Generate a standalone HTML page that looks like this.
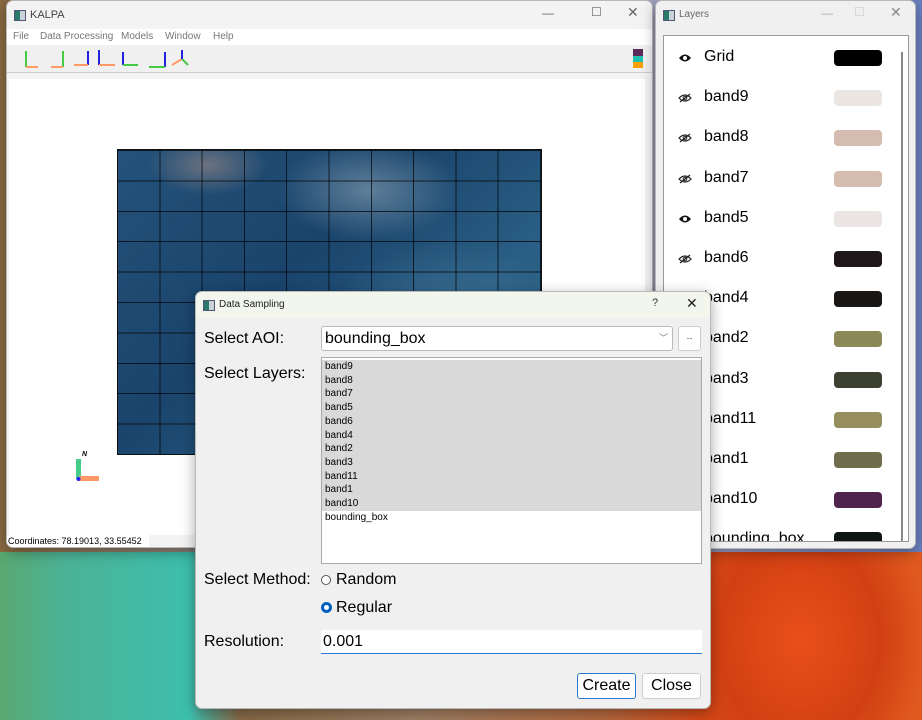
<!DOCTYPE html>
<html><head><meta charset="utf-8"><style>
*{box-sizing:border-box;margin:0;padding:0}
body{width:922px;height:720px;overflow:hidden;position:relative;font-family:"Liberation Sans",sans-serif;
background:
radial-gradient(ellipse 160px 200px at 800px 640px,#e8501a 0%,#d24012 50%,transparent 80%),
linear-gradient(90deg,#5aa870 0px,#4cb294 60px,#3dbfae 190px,#8a6a48 240px,#a08064 420px,#b46a40 600px,#d84a18 700px,#e05a20 922px);}
.top{position:absolute;left:0;top:0;width:922px;height:552px;background:linear-gradient(90deg,#8a6a40,#9aa0b8 40%,#a8aac8 70%,#6a80c0)}
.win{position:absolute;background:#f0f0f0;border:1px solid #b8b8b8;border-radius:7px;overflow:hidden;box-shadow:0 4px 14px rgba(0,0,0,.35)}
.tt{font-size:12px;color:#444;position:absolute}
.ic{position:absolute;width:12px;height:11px;background:linear-gradient(90deg,#2c7a6c 50%,#c8d4d8 50%);border:1px solid #557}
.ctl{position:absolute;font-size:12px;color:#666}
.row{position:absolute;left:0;width:240px;height:40px}
.row .n{position:absolute;left:40px;top:12px;font-size:16px;color:#000}
.row .s{position:absolute;left:170px;top:14px;width:48px;height:16px;border-radius:4px}
.row svg{position:absolute;left:14px;top:17px}
.lb{font-size:10px;line-height:13.7px;padding-left:3px;color:#000}
.L{position:absolute;font-size:16px}
</style></head><body>
<div class="top"></div>

<div class="win" style="left:6px;top:0;width:647px;height:548px;background:#f3f3f3">
 <div class="ic" style="left:7px;top:9px"></div>
 <div class="tt" style="left:23px;top:8px;font-size:11px">KALPA</div>
 <div class="ctl" style="left:535px;top:5px">—</div>
 <div class="ctl" style="left:584px;top:4px">☐</div>
 <div class="ctl" style="left:620px;top:3px;font-size:14px">✕</div>
 <div style="position:absolute;left:0;top:28px;width:100%;height:16px;background:#fff;font-size:10px;color:#777;white-space:nowrap">
  <span style="position:absolute;left:6px;top:2px">File</span>
  <span style="position:absolute;left:33px;top:2px">Data Processing</span>
  <span style="position:absolute;left:114px;top:2px">Models</span>
  <span style="position:absolute;left:158px;top:2px">Window</span>
  <span style="position:absolute;left:206px;top:2px">Help</span>
 </div>
 <div style="position:absolute;left:0;top:44px;width:100%;height:28px;background:#f0f0f0;border-bottom:1px solid #ccc">
  <svg width="190" height="28" style="position:absolute;left:5px;top:0">
   <g stroke-width="2" fill="none">
    <path d="M14 6V22" stroke="#4c4"/><path d="M14 22H26" stroke="#f96"/>
    <path d="M51 6V22" stroke="#4c4"/><path d="M39 22H51" stroke="#f96"/>
    <path d="M76 6V20" stroke="#22d"/><path d="M62 20H76" stroke="#f96"/>
    <path d="M87 5V20" stroke="#22d"/><path d="M87 20H103" stroke="#f96"/>
    <path d="M111 7V20" stroke="#22d"/><path d="M111 20H126" stroke="#4c4"/>
    <path d="M153 7V22" stroke="#22d"/><path d="M137 22H153" stroke="#4c4"/>
    <path d="M170 14L160 20" stroke="#f96"/><path d="M170 14L176 20" stroke="#4c4"/><path d="M170 14V5" stroke="#22d"/>
   </g>
  </svg>
  <div style="position:absolute;left:626px;top:4px;width:10px;height:7px;background:#5a2a5a"></div>
  <div style="position:absolute;left:626px;top:11px;width:10px;height:6px;background:#20c0b0"></div>
  <div style="position:absolute;left:626px;top:17px;width:10px;height:6px;background:#f8a000"></div>
 </div>
 <div style="position:absolute;left:2px;top:78px;width:636px;height:456px;background:#fff"></div>
 <div style="position:absolute;left:110px;top:148px;width:425px;height:306px;border:1.5px solid #111;
  background:
  repeating-linear-gradient(90deg,transparent 0 41.3px,rgba(0,0,0,.7) 41.3px 42.3px),
  repeating-linear-gradient(0deg,transparent 0 29.4px,rgba(0,0,0,.7) 29.4px 30.4px),
  radial-gradient(ellipse 90px 50px at 250px 40px,rgba(180,200,210,.45),transparent),
  radial-gradient(ellipse 60px 30px at 90px 15px,rgba(200,160,140,.45),transparent),
  radial-gradient(ellipse 120px 90px at 330px 180px,rgba(90,140,170,.45),transparent),
  linear-gradient(135deg,#24527a,#1a446c 40%,#2a5e84 70%,#30668a)"></div>
 <svg width="40" height="40" style="position:absolute;left:64px;top:448px">
  <text x="11" y="7" font-size="7" font-style="italic" font-weight="bold" font-family="Liberation Sans">N</text>
  <rect x="5" y="10" width="5" height="20" fill="#4c8" /><rect x="8" y="27" width="20" height="5" fill="#f96"/>
  <circle cx="7.5" cy="30" r="2" fill="#22f"/>
 </svg>
 <div style="position:absolute;left:0;top:534px;width:142px;height:14px;background:#fff;font-size:9px;color:#000;padding-left:1px;line-height:12px;white-space:nowrap">Coordinates: 78.19013, 33.55452</div>
</div>

<div class="win" style="left:655px;top:0;width:261px;height:549px">
 <div class="ic" style="left:7px;top:9px"></div>
 <div class="tt" style="left:23px;top:8px;font-size:10px;color:#666">Layers</div>
 <div class="ctl" style="left:165px;top:5px;color:#aaa">—</div>
 <div class="ctl" style="left:198px;top:4px;color:#ccc">☐</div>
 <div class="ctl" style="left:234px;top:3px;font-size:14px;color:#888">✕</div>
 <div style="position:absolute;left:7px;top:34px;width:246px;height:507px;background:#fff;border:1px solid #999;overflow:hidden">
  <div style="position:absolute;left:237px;top:16px;width:2px;height:490px;background:#888"></div>
  <div id="rows"></div>
 </div>
</div>

<div class="win" style="left:195px;top:291px;width:516px;height:418px;background:#f0f0f0">
 <div style="position:absolute;left:0;top:0;width:100%;height:26px;background:#f2f6ec"></div>
 <div class="ic" style="left:7px;top:8px"></div>
 <div class="tt" style="left:23px;top:7px;font-size:10px;color:#222">Data Sampling</div>
 <div class="ctl" style="left:456px;top:5px;font-size:11px;color:#333">?</div>
 <div class="ctl" style="left:490px;top:3px;font-size:14px;color:#222">✕</div>
 <div class="L" style="left:8px;top:38px">Select AOI:</div>
 <div style="position:absolute;left:125px;top:34px;width:352px;height:25px;background:#fff;border:1px solid #bbb;border-radius:3px;font-size:16px;padding-left:3px;line-height:23px">bounding_box<span style="position:absolute;right:4px;top:0;font-size:9px;color:#777">﹀</span></div>
 <div style="position:absolute;left:482px;top:34px;width:23px;height:25px;background:#fff;border:1px solid #ccc;border-radius:3px;font-size:9px;text-align:center;line-height:22px">··</div>
 <div class="L" style="left:8px;top:73px">Select Layers:</div>
 <div style="position:absolute;left:125px;top:65px;width:381px;height:207px;background:#fff;border:1px solid #aaa;padding-top:2px">
  <div style="background:#d9d9d9">
  <div class="lb">band9</div><div class="lb">band8</div><div class="lb">band7</div><div class="lb">band5</div><div class="lb">band6</div><div class="lb">band4</div><div class="lb">band2</div><div class="lb">band3</div><div class="lb">band11</div><div class="lb">band1</div><div class="lb">band10</div></div>
  <div class="lb">bounding_box</div>
 </div>
 <div class="L" style="left:8px;top:279px">Select Method:</div>
 <div style="position:absolute;left:125px;top:283px;width:10px;height:10px;border:1px solid #555;border-radius:50%;background:#fff"></div>
 <div class="L" style="left:140px;top:279px">Random</div>
 <div style="position:absolute;left:125px;top:310px;width:11px;height:11px;border-radius:50%;background:#fff;border:3px solid #0060c0"></div>
 <div class="L" style="left:140px;top:307px">Regular</div>
 <div class="L" style="left:8px;top:341px">Resolution:</div>
 <div style="position:absolute;left:125px;top:338px;width:381px;height:24px;background:#fff;border-bottom:1px solid #2a7ad0;font-size:16px;padding-left:2px;line-height:23px">0.001</div>
 <div style="position:absolute;left:381px;top:381px;width:59px;height:26px;background:#fdfdfd;border:1px solid #2a7ad0;border-radius:3px;font-size:16px;text-align:center;line-height:24px">Create</div>
 <div style="position:absolute;left:446px;top:381px;width:59px;height:26px;background:#fdfdfd;border:1px solid #ccc;border-radius:3px;font-size:16px;text-align:center;line-height:24px">Close</div>
</div>

<script>
var d=[["Grid","#000",1],["band9","#ebe6e2",0],["band8","#d4bcb0",0],["band7","#d4bcae",0],["band5","#ebe6e4",1],["band6","#1e1618",0],["band4","#1a1614",0],["band2","#8c8858",0],["band3","#3c4030",0],["band11","#968e5c",0],["band1","#706c4e",0],["band10","#50244e",0],["bounding_box","#0e1614",0]];
var h="";d.forEach(function(r,i){
var eye=r[2]?'<svg width="14" height="10"><path d="M1 5Q7 -2 13 5Q7 12 1 5Z" fill="#111"/><circle cx="7" cy="5" r="2" fill="#fff"/></svg>'
:'<svg width="14" height="10"><path d="M1 5Q7 -1 13 5Q7 11 1 5Z" fill="none" stroke="#222" stroke-width="1.2"/><circle cx="7" cy="5" r="1.8" fill="none" stroke="#222"/><path d="M2 9L12 1" stroke="#222" stroke-width="1.2"/></svg>';
h+='<div class="row" style="top:'+(i*40.2)+'px">'+eye+'<div class="n">'+r[0]+'</div><div class="s" style="background:'+r[1]+'"></div></div>';});
document.getElementById("rows").innerHTML=h;
</script>
</body></html>
